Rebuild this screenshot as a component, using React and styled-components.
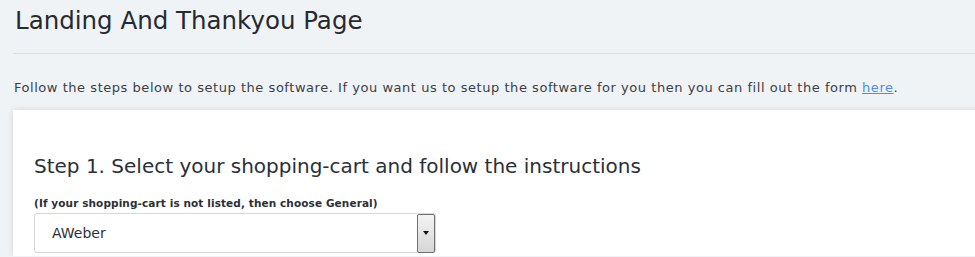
import React from 'react'
import styled, { createGlobalStyle } from 'styled-components'

const Global = createGlobalStyle`
  body {
    margin: 0;
    background: #f0f3f6;
    font-family: "DejaVu Sans", "Liberation Sans", sans-serif;
    color: #2b3036;
    overflow: hidden;
  }
`

const Page = styled.div`
  padding: 0 0 0 13px;
`

const Title = styled.h1`
  margin: 0;
  padding: 6px 0 0 2px;
  font-size: 24.5px;
  font-weight: 400;
  line-height: 30px;
  color: #252a31;
`

const Rule = styled.hr`
  margin: 17px 0 0;
  border: 0;
  border-top: 1px solid #dbdee2;
`

const Intro = styled.p`
  margin: 0;
  padding: 25px 0 0 1px;
  font-size: 13px;
  line-height: 18px;
  color: #3a3f45;
  letter-spacing: 0.54px;
`

const Link = styled.a`
  color: #4a90e2;
  text-decoration: underline;
`

const Card = styled.section`
  margin-top: 13px;
  margin-right: -20px;
  background: #fff;
  box-shadow: 0 0 6px rgba(0, 0, 0, 0.12);
  padding: 44px 0 3px 21px;
`

const StepTitle = styled.h2`
  margin: 0;
  font-size: 20px;
  font-weight: 400;
  line-height: 24px;
  color: #2b3036;
`

const Hint = styled.div`
  margin-top: 18px;
  font-size: 10.5px;
  font-weight: 600;
  line-height: 14px;
  letter-spacing: 0.1px;
  color: #2b3036;
`

const Select = styled.div`
  margin-top: 3px;
  width: 383px;
  height: 38px;
  border: 1px solid #d5d8dc;
  border-radius: 3px;
  display: flex;
  align-items: center;
  justify-content: space-between;
  padding-left: 17px;
  box-sizing: content-box;
  font-size: 14px;
  color: #2b3036;
`

const Arrow = styled.div`
  width: 16px;
  height: 37px;
  border: 1px solid #6f6f6f;
  border-radius: 2px;
  background: linear-gradient(#f4f4f4, #d6d6d6);
  display: flex;
  align-items: center;
  justify-content: center;
  &::after {
    content: '';
    border-left: 3px solid transparent;
    border-right: 3px solid transparent;
    border-top: 4px solid #111;
  }
`

export default function App() {
  return (
    <>
      <Global />
      <Page>
        <Title>Landing And Thankyou Page</Title>
        <Rule />
        <Intro>
          Follow the steps below to setup the software. If you want us to setup the software for you then you can fill out the form <Link href="#">here</Link>.
        </Intro>
        <Card>
          <StepTitle>Step 1. Select your shopping-cart and follow the instructions</StepTitle>
          <Hint>(If your shopping-cart is not listed, then choose General)</Hint>
          <Select>
            <span>AWeber</span>
            <Arrow />
          </Select>
        </Card>
      </Page>
    </>
  )
}
